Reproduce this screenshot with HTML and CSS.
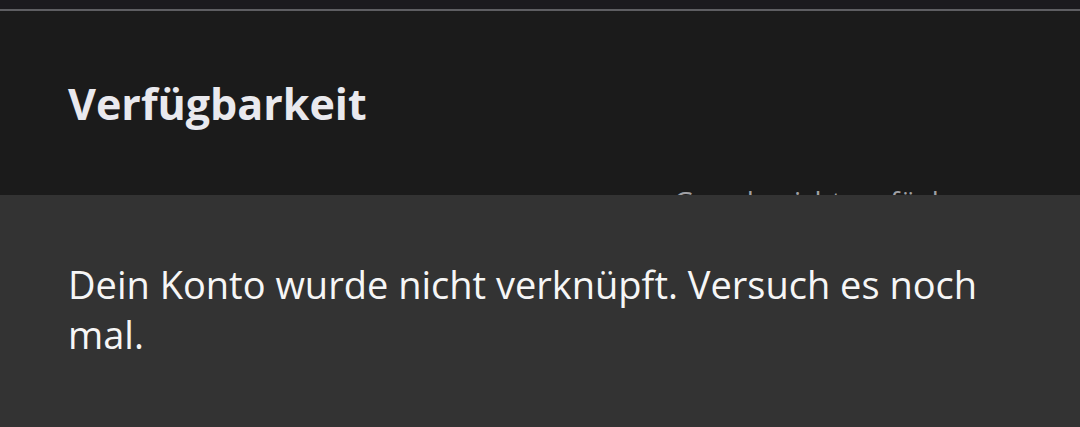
FILE: index.html
```html
<!DOCTYPE html>
<html lang="de">
<head>
    <meta charset="UTF-8">
    <meta name="viewport" content="width=device-width, initial-scale=1.0">
    <title>Verfügbarkeit</title>
    <link rel="stylesheet" href="styles.css">
</head>
<body>
    <div class="top-edge"></div>

    <div class="page">
        <h1 class="title">Verfügbarkeit</h1>
        <div class="setting-row">
            <span class="setting-value">Gerade nicht verfügbar</span>
        </div>
    </div>

    <div class="snackbar" role="alert">
        <p class="snackbar-text">Dein Konto wurde nicht verknüpft. Versuch es noch mal.</p>
    </div>
</body>
</html>
```

FILE: styles.css
```css
* {
    box-sizing: border-box;
}
html, body {
    height: 100%;
}
body {
    margin: 0;
    background-color: #1b1b1b;
    font-family: "Open Sans", Roboto, sans-serif;
    color: #ececf0;
    position: relative;
    overflow: hidden;
}
.top-edge {
    height: 11px;
    background-color: #1b1a1e;
    border-bottom: 2px solid #5e5e62;
}
.page {
    padding: 0 68px;
}
.title {
    margin: 0;
    padding-top: 68px;
    font-size: 43px;
    font-weight: 700;
    line-height: 50px;
    color: #e9e9ee;
}
.setting-row {
    display: flex;
    justify-content: flex-end;
    padding-top: 52px;
    padding-right: 36px;
}
.setting-value {
    font-size: 28px;
    color: #a0a0a4;
    line-height: 40px;
}
.snackbar {
    position: absolute;
    top: 195px;
    left: 0;
    right: 0;
    bottom: 0;
    background-color: #333333;
    padding: 64px 68px;
}
.snackbar-text {
    margin: 0;
    font-family: "Open Sans", sans-serif;
    font-size: 38px;
    line-height: 50px;
    color: #f6f6f6;
}
```
